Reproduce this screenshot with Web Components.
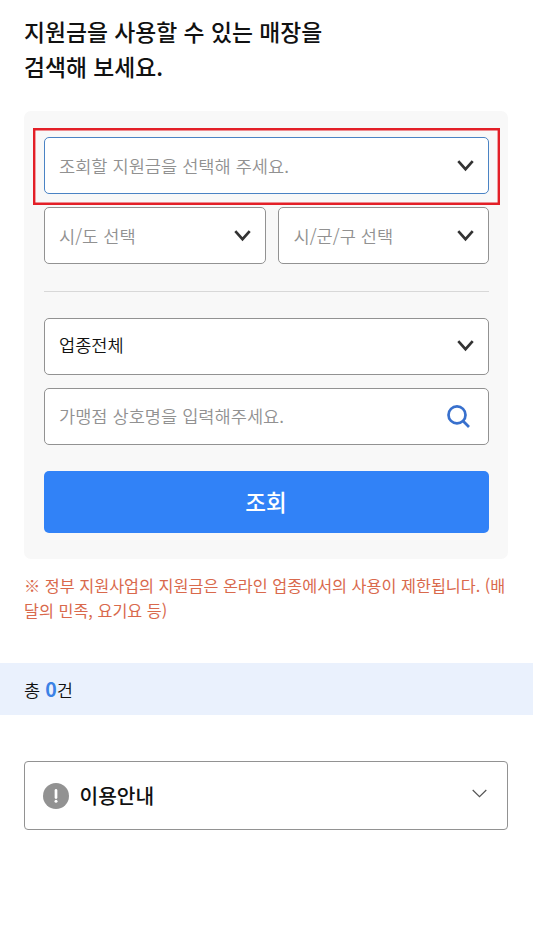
<!DOCTYPE html>
<html lang="ko">
<head>
<meta charset="UTF-8">
<meta name="viewport" content="width=device-width, initial-scale=1.0">
<title>매장 검색</title>
<style>
    body {
        margin: 0;
        background: #fff;
        color: #111;
        font-family: "Noto Sans CJK KR", "Noto Sans", sans-serif;
    }
</style>
</head>
<body>
<store-page></store-page>

<script>
// 선택 박스
class SelectField extends HTMLElement {
    constructor() {
        super();
        this.attachShadow({ mode: 'open' });
    }

    connectedCallback() {
        this.shadowRoot.innerHTML = `
            <style>
                :host {
                    display: flex;
                    align-items: center;
                    justify-content: space-between;
                    box-sizing: border-box;
                    height: 57px;
                    padding: 0 14px 0 14.5px;
                    border: 1px solid #929292;
                    border-radius: 5px;
                    background: #fff;
                    color: #919191;
                    font-size: 17.6px;
                    font-weight: 350;
                    line-height: 26px;
                    white-space: nowrap;
                }
                :host([focused]) { border-color: #4a83c4; }
                :host([filled]) { color: #111; }
                :host([filled]) span { margin-bottom: 2px; }
                svg { flex: none; display: block; }
            </style>
            <span><slot></slot></span>
            <svg width="17" height="12" viewBox="0 0 17 12">
                <path d="M1.3 1.2 8.5 9.2 15.7 1.2" fill="none" stroke="#333" stroke-width="2.7"/>
            </svg>
        `;
    }
}

// 상호명 검색 입력
class SearchField extends HTMLElement {
    constructor() {
        super();
        this.attachShadow({ mode: 'open' });
    }

    connectedCallback() {
        this.shadowRoot.innerHTML = `
            <style>
                :host {
                    display: flex;
                    align-items: center;
                    justify-content: space-between;
                    box-sizing: border-box;
                    height: 57px;
                    padding: 0 17.5px 0 14.5px;
                    border: 1px solid #929292;
                    border-radius: 5px;
                    background: #fff;
                    color: #919191;
                    font-size: 17.6px;
                    font-weight: 350;
                    line-height: 26px;
                }
                svg { display: block; }
            </style>
            <span><slot></slot></span>
            <svg width="23" height="23" viewBox="0 0 23 23" fill="none" stroke="#3870cd" stroke-width="2.7">
                <circle cx="10" cy="9.9" r="8.5"/>
                <path d="M15.8 15.7 22 22"/>
            </svg>
        `;
    }
}

// 강조 테두리: 필드 주위를 감싸고 자리는 차지하지 않음
class MarkFrame extends HTMLElement {
    constructor() {
        super();
        this.attachShadow({ mode: 'open' });
    }

    connectedCallback() {
        this.shadowRoot.innerHTML = `
            <style>
                :host { display: block; position: relative; }
                .frame {
                    position: absolute;
                    inset: -9px -11.5px -11px -10.5px;
                    box-shadow: inset 0 0 0 2.4px #e31f27;
                    pointer-events: none;
                }
            </style>
            <slot></slot>
            <div class="frame"></div>
        `;
    }
}

class SubmitButton extends HTMLElement {
    constructor() {
        super();
        this.attachShadow({ mode: 'open' });
    }

    connectedCallback() {
        this.shadowRoot.innerHTML = `
            <style>
                :host { display: block; }
                button {
                    display: block;
                    width: 100%;
                    height: 62px;
                    padding: 0 0 2px;
                    border: 0;
                    border-radius: 5px;
                    background: #3182f7;
                    color: #fff;
                    font: 500 22.5px/32px "Noto Sans CJK KR", sans-serif;
                }
            </style>
            <button type="button"><slot></slot></button>
        `;
    }
}

// 검색 결과 건수
class ResultCount extends HTMLElement {
    constructor() {
        super();
        this.attachShadow({ mode: 'open' });
    }

    connectedCallback() {
        this.shadowRoot.innerHTML = `
            <style>
                :host {
                    display: flex;
                    align-items: center;
                    box-sizing: border-box;
                    height: 52px;
                    padding: 1px 24px 0;
                    background: #eaf1fd;
                    font-size: 17.6px;
                    font-weight: 350;
                    line-height: 28px;
                }
                b { color: #3b82e6; font-size: 19.5px; font-weight: 700; }
            </style>
            <div>총 <b>${this.getAttribute('count')}</b>건</div>
        `;
    }
}

// 이용안내 접기 패널
class GuidePanel extends HTMLElement {
    constructor() {
        super();
        this.attachShadow({ mode: 'open' });
    }

    connectedCallback() {
        this.shadowRoot.innerHTML = `
            <style>
                :host {
                    display: flex;
                    align-items: center;
                    box-sizing: border-box;
                    height: 69px;
                    padding: 0 20px 0 18px;
                    border: 1px solid #929292;
                    border-radius: 4px;
                    font-size: 20.3px;
                    font-weight: 500;
                    line-height: 30px;
                }
                svg { flex: none; display: block; }
                span { flex: 1; margin: 0 0 2px 10.5px; }
                .arrow { margin-bottom: 4px; }
            </style>
            <svg width="26" height="26" viewBox="0 0 26 26">
                <circle cx="13" cy="13" r="13" fill="#929292"/>
                <path d="M13 7.4v7.2" stroke="#fff" stroke-width="2.7" stroke-linecap="round"/>
                <circle cx="13" cy="18.2" r="1.5" fill="#fff"/>
            </svg>
            <span><slot></slot></span>
            <svg class="arrow" width="15" height="9" viewBox="0 0 15 9">
                <path d="M.7 1 7.5 7.7 14.3 1" fill="none" stroke="#555" stroke-width="1.2"/>
            </svg>
        `;
    }
}

class StorePage extends HTMLElement {
    constructor() {
        super();
        this.attachShadow({ mode: 'open' });
    }

    connectedCallback() {
        this.shadowRoot.innerHTML = `
            <style>
                :host {
                    display: flex;
                    flex-direction: column;
                    box-sizing: border-box;
                    height: 932px;
                    padding-top: 14px;
                    overflow: hidden;
                }
                h1 {
                    margin: 0 24px;
                    font-size: 22.8px;
                    font-weight: 500;
                    line-height: 35px;
                }
                .card {
                    display: flex;
                    flex-direction: column;
                    box-sizing: border-box;
                    height: 448px;
                    margin: 27px 25px 0 24px;
                    padding: 26px 19.5px 0;
                    border-radius: 7px;
                    background: #f8f8f8;
                }
                .row {
                    display: grid;
                    grid-template-columns: 222.5px 1fr;
                    gap: 12px;
                    margin-top: 13.4px;
                }
                hr {
                    width: 100%;
                    height: 1px;
                    margin: 26.6px 0 26px;
                    border: 0;
                    background: #d8d8d8;
                }
                search-field { margin: 13px 0 26px; }
                .notice {
                    margin: 14px 20px 0 24px;
                    color: #d9694c;
                    font-size: 16.25px;
                    font-weight: 400;
                    line-height: 25px;
                    white-space: nowrap;
                }
                result-count { margin-top: 40px; }
                guide-panel { margin: 46px 25px 0 24px; }
            </style>
            <h1>지원금을 사용할 수 있는 매장을<br>검색해 보세요.</h1>
            <div class="card">
                <mark-frame>
                    <select-field focused>조회할 지원금을 선택해 주세요.</select-field>
                </mark-frame>
                <div class="row">
                    <select-field>시/도 선택</select-field>
                    <select-field>시/군/구 선택</select-field>
                </div>
                <hr>
                <select-field filled>업종전체</select-field>
                <search-field>가맹점 상호명을 입력해주세요.</search-field>
                <submit-button>조회</submit-button>
            </div>
            <div class="notice">※ 정부 지원사업의 지원금은 온라인 업종에서의 사용이 제한됩니다. (배<br>달의 민족, 요기요 등)</div>
            <result-count count="0"></result-count>
            <guide-panel>이용안내</guide-panel>
        `;
    }
}

// 컴포넌트 등록
customElements.define('select-field', SelectField);
customElements.define('search-field', SearchField);
customElements.define('mark-frame', MarkFrame);
customElements.define('submit-button', SubmitButton);
customElements.define('result-count', ResultCount);
customElements.define('guide-panel', GuidePanel);
customElements.define('store-page', StorePage);
</script>
</body>
</html>
